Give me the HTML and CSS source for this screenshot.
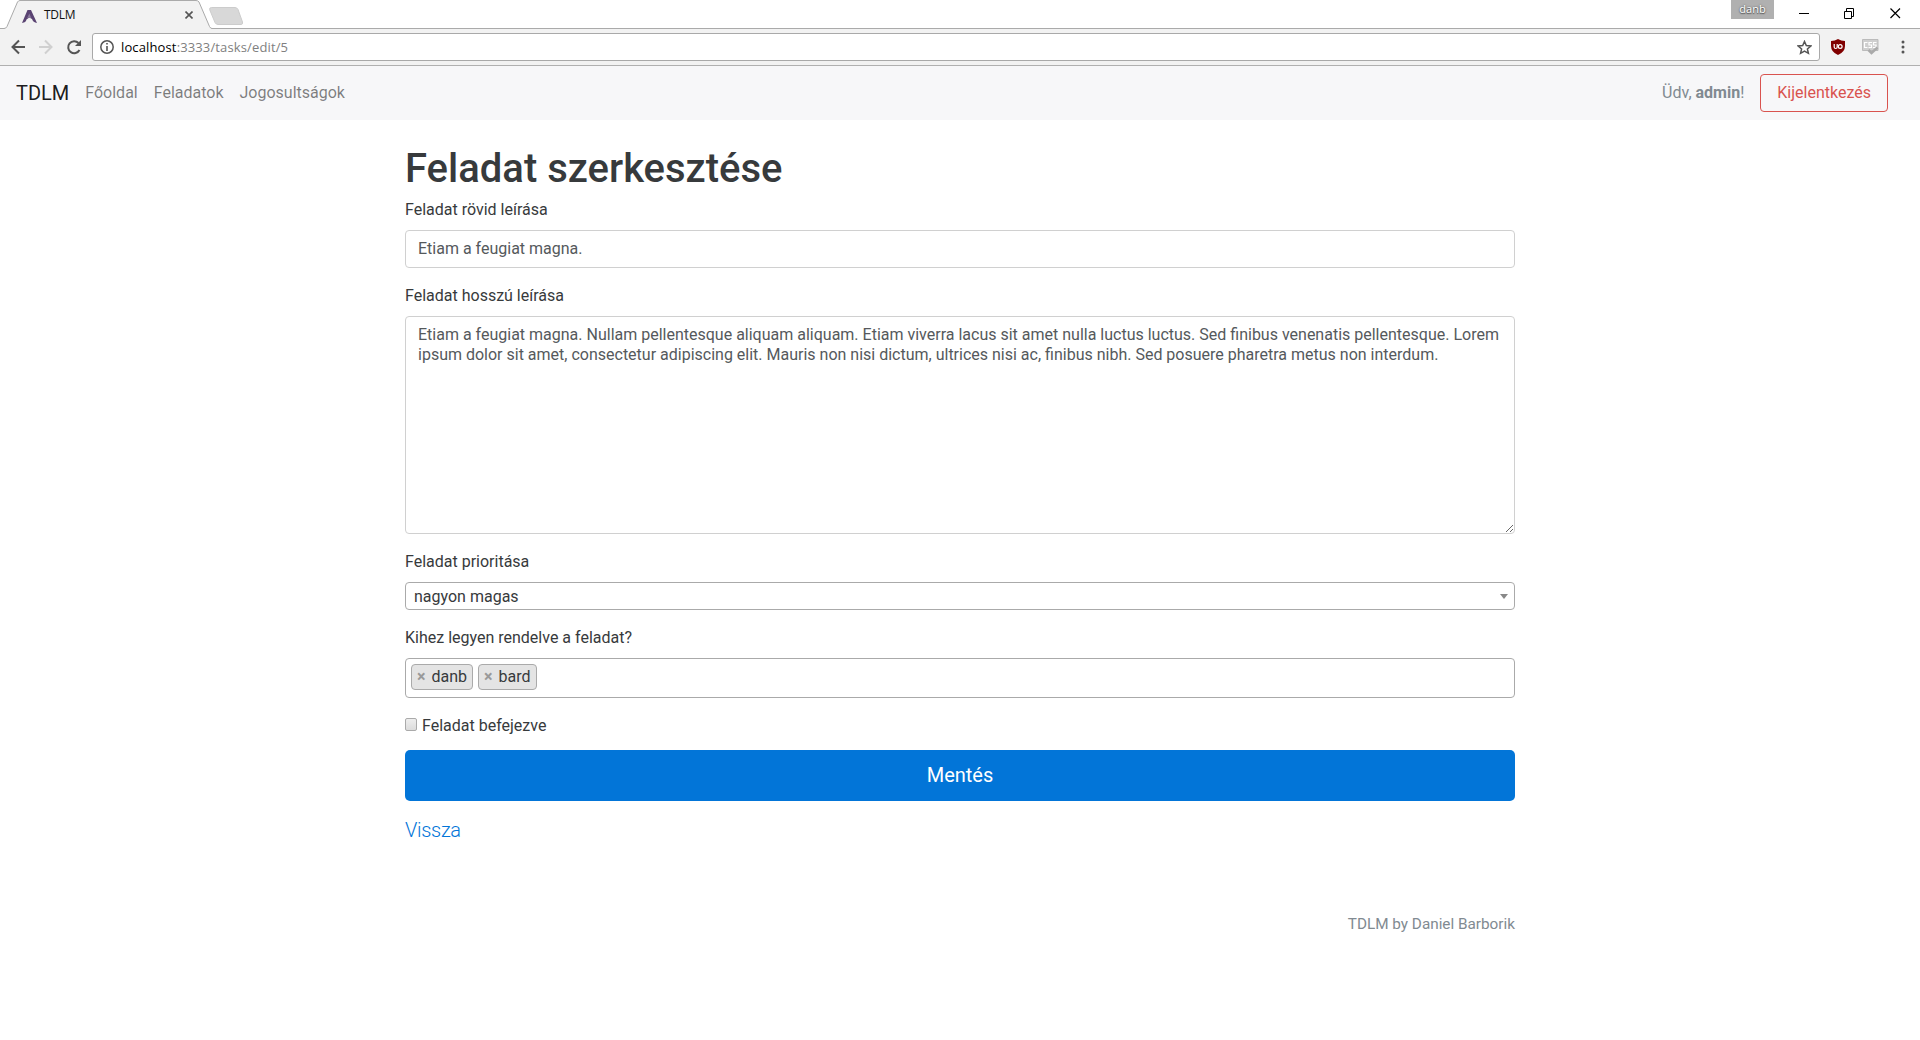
FILE: index.html
```html
<!DOCTYPE html>
<html lang="hu">
<head>
<meta charset="utf-8">
<title>TDLM</title>
<link rel="stylesheet" href="styles.css">
</head>
<body>
<div class="browser">
  <div class="tabstrip">
    <div class="tab">
      <svg class="tab-shape" width="212" height="29" viewBox="0 0 212 29"><path d="M0 29V28.5H4Q6 28.5 7 26.500L17.500 2Q18.500 .5 20 .5H196Q198 .5 199 2L209.500 26.500Q210.500 28.500 212 28.500V29Z" fill="#f2f2f2"/><path d="M0 28.500H4Q6 28.500 7 26.500L17.500 2Q18.500 .5 20 .5H196Q198 .5 199 2L209.500 26.500Q210.500 28.500 212 28.500" fill="none" stroke="#aaa"/></svg>
      <div class="tab-content">
        <svg class="favicon" width="15" height="13" viewBox="0 0 15 13"><path d="M5.500 0H9L15 13Q11 12.500 10 9L7.300 7.500 4.500 9.500Q4 12.500 0 13Z" fill="#5a4372"/><path d="M7.300 3.500 9.500 8.500 7.300 7.300 5 8.500Z" fill="#8c7b9e"/></svg>
        <span class="tab-title">TDLM</span>
        <svg class="tab-close" width="8" height="8" viewBox="0 0 8 8"><path d="M.5.5 7.500 7.500M7.500.5.5 7.500" stroke="#555" stroke-width="1.600"/></svg>
      </div>
    </div>
    <svg class="new-tab" width="36" height="18" viewBox="0 0 36 18"><path d="M2.500.5H26Q28 .5 29 2.500L33.500 15Q34 17.500 32 17.500H9Q7 17.500 6 15.500L.8 3Q0 .5 2.500.5Z" fill="#d8d8d8" stroke="#ccc"/></svg>
    <div class="profile">danb</div>
    <svg class="window-controls" width="102" height="12" viewBox="0 0 102 12"><g fill="none" stroke="#000"><path d="M0 6.500H10"/><path d="M45.500 4.500H52.500V11.500H45.500ZM47.500 4V1.500H54.500V9.500H53"/><path d="M91.500 1.500 101 11M101 1.500 91.500 11" stroke-width="1.200"/></g></svg>
  </div>
  <div class="toolbar">
    <svg class="nav-icons" width="71" height="16" viewBox="0 0 71 16"><path d="M14 8H2M8 1.500 1.500 8 8 14.500" fill="none" stroke="#555" stroke-width="2"/><path d="M28 8H40M34 1.500 40.500 8 34 14.500" fill="none" stroke="#d0d0d0" stroke-width="2"/><path d="M68.500 11A6 6 0 1 1 67.500 4" fill="none" stroke="#555" stroke-width="2"/><path d="M70 1V7H64Z" fill="#555"/></svg>
    <div class="omnibox">
      <svg width="14" height="14" viewBox="0 0 14 14"><circle cx="7" cy="7" r="6.200" fill="none" stroke="#555" stroke-width="1.500"/><path d="M6.200 3H7.800V4.600H6.200ZM6.200 6H7.800V11H6.200Z" fill="#555"/></svg>
      <span class="url"><span class="url-host">localhost</span>:3333/tasks/edit/5</span>
      <svg class="star" width="15" height="15" viewBox="0 0 15 15"><path d="M7.500 1.500 9.300 5.600 13.800 6 10.400 9 11.400 13.300 7.500 11 3.600 13.300 4.600 9 1.200 6 5.700 5.600Z" fill="none" stroke="#555" stroke-width="1.500"/></svg>
    </div>
    <svg class="shield" width="14" height="16" viewBox="0 0 14 16"><path d="M7 0Q10 2 14 2V7Q14 13 7 16Q0 13 0 7V2Q4 2 7 0Z" fill="#800000"/><path d="M3.200 5V8Q3.200 9.500 4.700 9.500Q6.200 9.500 6.200 8V5" fill="none" stroke="#fff" stroke-width="1.200"/><circle cx="9.200" cy="7.500" r="1.900" fill="none" stroke="#fff" stroke-width="1.200"/></svg>
    <svg class="css-icon" width="17" height="16" viewBox="0 0 17 16"><path d="M.5.5H16V11.500H.5Z" fill="#cfcfcf" stroke="#bbb"/><path d="M5.500 3.500H2.500V8.500H5.500M10 3.500H7V6H9.500V8.500H6.500M14.500 3.500H11.500V6H14V8.500H11" fill="none" stroke="#fff" stroke-width="1.200"/><path d="M6.500 11 9.500 14 15.500 8.500" fill="none" stroke="#aaa" stroke-width="2.500"/></svg>
    <svg class="menu-dots" width="4" height="14" viewBox="0 0 4 14"><g fill="#555"><circle cx="2" cy="2" r="1.500"/><circle cx="2" cy="7" r="1.500"/><circle cx="2" cy="12" r="1.500"/></g></svg>
  </div>
</div>
<nav class="navbar">
  <a class="brand">TDLM</a>
  <a class="nav-link">Főoldal</a>
  <a class="nav-link">Feladatok</a>
  <a class="nav-link">Jogosultságok</a>
  <span class="greeting">Üdv, <b>admin</b>!</span>
  <button class="logout">Kijelentkezés</button>
</nav>
<main class="container">
  <h1>Feladat szerkesztése</h1>
  <form>
    <div class="form-group">
      <label for="short">Feladat rövid leírása</label>
      <input class="form-control" id="short" type="text" value="Etiam a feugiat magna.">
    </div>
    <div class="form-group">
      <label for="long">Feladat hosszú leírása</label>
      <textarea class="form-control" id="long" rows="10" spellcheck="false">Etiam a feugiat magna. Nullam pellentesque aliquam aliquam. Etiam viverra lacus sit amet nulla luctus luctus. Sed finibus venenatis pellentesque. Lorem ipsum dolor sit amet, consectetur adipiscing elit. Mauris non nisi dictum, ultrices nisi ac, finibus nibh. Sed posuere pharetra metus non interdum.</textarea>
    </div>
    <div class="form-group">
      <label>Feladat prioritása</label>
      <div class="select-single"><span>nagyon magas</span><i class="arrow"></i></div>
    </div>
    <div class="form-group">
      <label>Kihez legyen rendelve a feladat?</label>
      <div class="select-multiple">
        <span class="choice"><b class="remove">×</b>danb</span>
        <span class="choice"><b class="remove">×</b>bard</span>
      </div>
    </div>
    <div class="form-check"><span class="checkbox" role="checkbox" aria-checked="false"></span><span>Feladat befejezve</span></div>
    <button class="save" type="button">Mentés</button>
  </form>
  <a class="back">Vissza</a>
  <footer>TDLM by Daniel Barborik</footer>
</main>
</body>
</html>
```
FILE: styles.css
```css
* { box-sizing: border-box; }
body {
  margin: 0;
  background: #fff;
  color: #373a3c;
  font: 400 16px/1.5 Roboto, sans-serif;
}
svg { display: block; flex: none; }

/* Browser window */
.browser { font-family: "Open Sans", "Noto Sans", sans-serif; }
.tabstrip {
  display: flex;
  align-items: flex-start;
  height: 29px;
  box-shadow: inset 0 -1px #aaa;
}
.tab { display: grid; width: 212px; height: 29px; }
.tab-shape, .tab-content { grid-area: 1 / 1; }
.tab-content {
  display: flex;
  align-items: center;
  padding: 1px 19px 0 22px;
  color: #111;
  font-size: 12px;
  line-height: 16px;
}
.favicon { margin-top: 2px; }
.tab-title { margin-left: 7px; letter-spacing: -.3px; }
.tab-close { margin-left: auto; }
.new-tab { margin: 7px 0 0 -3px; }
.profile {
  width: 43px;
  height: 19px;
  margin-left: auto;
  background: #b0b0b0;
  color: #fff;
  font-size: 11px;
  line-height: 18px;
  text-align: center;
  text-shadow: 0 0 2px #555, 0 1px 1px #555;
}
.window-controls { margin: 7px 19px 0 25px; }
.toolbar {
  display: flex;
  align-items: center;
  height: 37px;
  padding: 0 15px 0 11px;
  background: #f2f2f2;
  border-bottom: 1px solid #b0b0b0;
}
.omnibox {
  display: flex;
  flex: 1;
  align-items: center;
  height: 28px;
  margin: 0 11px 0 10px;
  padding: 0 7px;
  border: 1px solid #a9a9a9;
  border-radius: 3px;
  background: #fff;
}
.url { margin: 1px 0 0 7px; color: #808080; font-size: 13px; letter-spacing: .13px; }
.url-host { color: #000; }
.star { margin-left: auto; }
.css-icon { margin-left: 17px; }
.menu-dots { margin-left: 22px; }

/* Site navigation */
.navbar {
  display: flex;
  align-items: center;
  gap: 16px;
  height: 54px;
  padding: 0 32px 0 16px;
  background: #f7f7f9;
}
.brand { color: rgba(0, 0, 0, .9); font-size: 20px; }
.nav-link { color: rgba(0, 0, 0, .5); }
.greeting { margin-left: auto; color: #818a91; }
.logout {
  height: 38px;
  padding: 0 16px;
  border: 1px solid #d9534f;
  border-radius: 4px;
  background: none;
  color: #d9534f;
  font: inherit;
}

/* Task form */
.container { width: 1110px; margin: 0 auto; padding-top: 27px; }
h1 { margin: 0 0 7px; font-size: 40px; font-weight: 500; line-height: 44px; }
.form-group { margin-bottom: 16px; }
label { display: block; margin-bottom: 8px; }
.form-control {
  display: block;
  width: 100%;
  padding: 8px 12px;
  border: 1px solid #d0d0d0;
  border-radius: 4px;
  background: #fff;
  color: #55595c;
  font: 16px/20px Roboto, sans-serif;
}
input.form-control { height: 38px; padding: 7px 12px 9px; }
textarea.form-control { height: 218px; overflow: auto; resize: vertical; }
.select-single {
  display: flex;
  align-items: center;
  justify-content: space-between;
  height: 28px;
  padding: 1px 6px 0 8px;
  border: 1px solid #aaa;
  border-radius: 4px;
}
.arrow {
  border: 4px solid transparent;
  border-top: 5px solid #888;
  border-bottom: 0;
}
.select-multiple {
  display: flex;
  gap: 5px;
  height: 40px;
  padding: 5px;
  border: 1px solid #aaa;
  border-radius: 4px;
}
.choice {
  height: 26px;
  padding: 0 5px;
  border: 1px solid #aaa;
  border-radius: 4px;
  background: #e4e4e4;
  line-height: 24px;
}
.remove { margin-right: 6px; color: #999; }
.form-check { display: flex; gap: 5px; height: 24px; margin-bottom: 12px; }
.checkbox {
  width: 12px;
  height: 13px;
  margin-top: 4px;
  border: 1px solid #aaa;
  border-radius: 2px;
  background: linear-gradient(#eee, #dcdcdc);
}
.save {
  display: block;
  width: 100%;
  height: 51px;
  border: 0;
  border-radius: 5px;
  background: #0275d8;
  color: #fff;
  font: 400 20px/25px Roboto, sans-serif;
}
.back {
  display: block;
  margin-top: 14px;
  color: #0275d8;
  font-size: 20px;
  font-weight: 300;
  letter-spacing: -.3px;
  line-height: 30px;
}
footer { margin-top: 67px; color: #818a91; font-size: 15.3px; line-height: 24px; text-align: right; }
```
